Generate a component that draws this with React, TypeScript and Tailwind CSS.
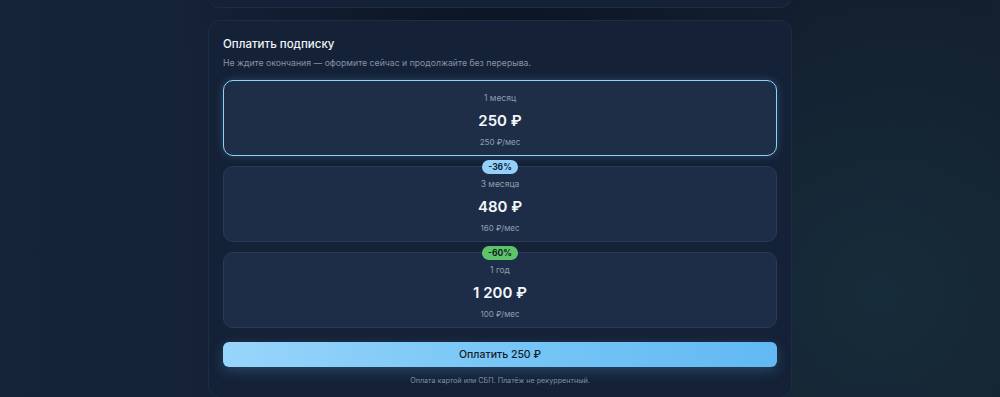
import React, { useState } from "react"

interface Plan {
  id: string
  label: string
  price: string
  perMonth: string
  badge?: { text: string; tone: "blue" | "green" }
}

const plans: Plan[] = [
  { id: "m1", label: "1 месяц", price: "250 ₽", perMonth: "250 ₽/мес" },
  { id: "m3", label: "3 месяца", price: "480 ₽", perMonth: "160 ₽/мес", badge: { text: "-36%", tone: "blue" } },
  { id: "y1", label: "1 год", price: "1 200 ₽", perMonth: "100 ₽/мес", badge: { text: "-60%", tone: "green" } },
]

export default function App() {
  const [selected, setSelected] = useState("m1")
  const current = plans.find((p) => p.id === selected) ?? plans[0]

  return (
    <div
      className="min-h-[397px] overflow-hidden bg-[radial-gradient(circle_at_88%_74%,#172c3a_0%,rgba(23,44,58,0)_32%),radial-gradient(ellipse_at_50%_0%,#0c1524_0%,rgba(12,21,36,0)_45%),linear-gradient(90deg,#16243a_0%,#121e31_50%,#13202f_100%)] text-white"
      style={{ fontFamily: "Inter, 'Noto Sans', sans-serif" }}
    >
      <div className="mx-auto flex w-[584px] flex-col">
        {/* previous card, mostly scrolled off */}
        <div className="-mt-[20px] h-[28px] rounded-xl border border-[#1f2d43] bg-[#142136]" />

        <div className="mt-[12px] rounded-xl border border-[#1f2d43] bg-[#142136] px-[14px] pt-[15px] pb-[10px]">
          <h2 className="text-[11.5px] leading-[16px] font-medium text-[#f1f5fa]">Оплатить подписку</h2>
          <p className="mt-[4px] text-[8.7px] leading-[14px] text-[#8593a8]">
            Не ждите окончания — оформите сейчас и продолжайте без перерыва.
          </p>

          <div className="mt-[10px] flex flex-col gap-[10px]">
            {plans.map((plan) => {
              const active = plan.id === selected
              return (
                <button
                  key={plan.id}
                  onClick={() => setSelected(plan.id)}
                  className={
                    active
                      ? "relative flex h-[76px] flex-col items-center justify-center rounded-[10px] border-[1.5px] border-[#8ed2fa] bg-[#1e2e47] pt-[3px] shadow-[0_0_10px_rgba(110,190,245,0.25)]"
                      : "relative flex h-[76px] flex-col items-center justify-center rounded-[10px] border border-[#2b3b55] bg-[#1e2d47] pt-[3px]"
                  }
                >
                  {plan.badge && (
                    <span
                      className={
                        plan.badge.tone === "blue"
                          ? "absolute -top-[7px] left-1/2 flex h-[14px] w-[36px] -translate-x-1/2 items-center justify-center rounded-full bg-[#93d1fb] text-[8.5px] font-bold text-[#14233a]"
                          : "absolute -top-[7px] left-1/2 flex h-[14px] w-[36px] -translate-x-1/2 items-center justify-center rounded-full bg-[#5ec46c] text-[8.5px] font-bold text-[#10231a]"
                      }
                    >
                      {plan.badge.text}
                    </span>
                  )}
                  <span className="text-[8.5px] leading-[14px] text-[#909db2]">{plan.label}</span>
                  <span className="mt-[4px] text-[15px] leading-[24px] font-semibold text-[#f4f7fb]">{plan.price}</span>
                  <span className="mt-[2px] text-[8px] leading-[14px] text-[#909db2]">{plan.perMonth}</span>
                </button>
              )
            })}
          </div>

          <button className="mt-[14px] flex h-[25px] w-full items-center justify-center rounded-[6px] bg-[linear-gradient(90deg,#98d5fb_0%,#78c6f6_50%,#62b9f3_100%)] text-[10.5px] font-medium text-[#0f1b2b] shadow-[0_4px_14px_rgba(98,185,243,0.25)]">
            Оплатить {current.price}
          </button>

          <p className="mt-[8px] text-center text-[7.2px] leading-[12px] text-[#8390a4]">
            Оплата картой или СБП. Платёж не рекуррентный.
          </p>
        </div>
      </div>
    </div>
  )
}
